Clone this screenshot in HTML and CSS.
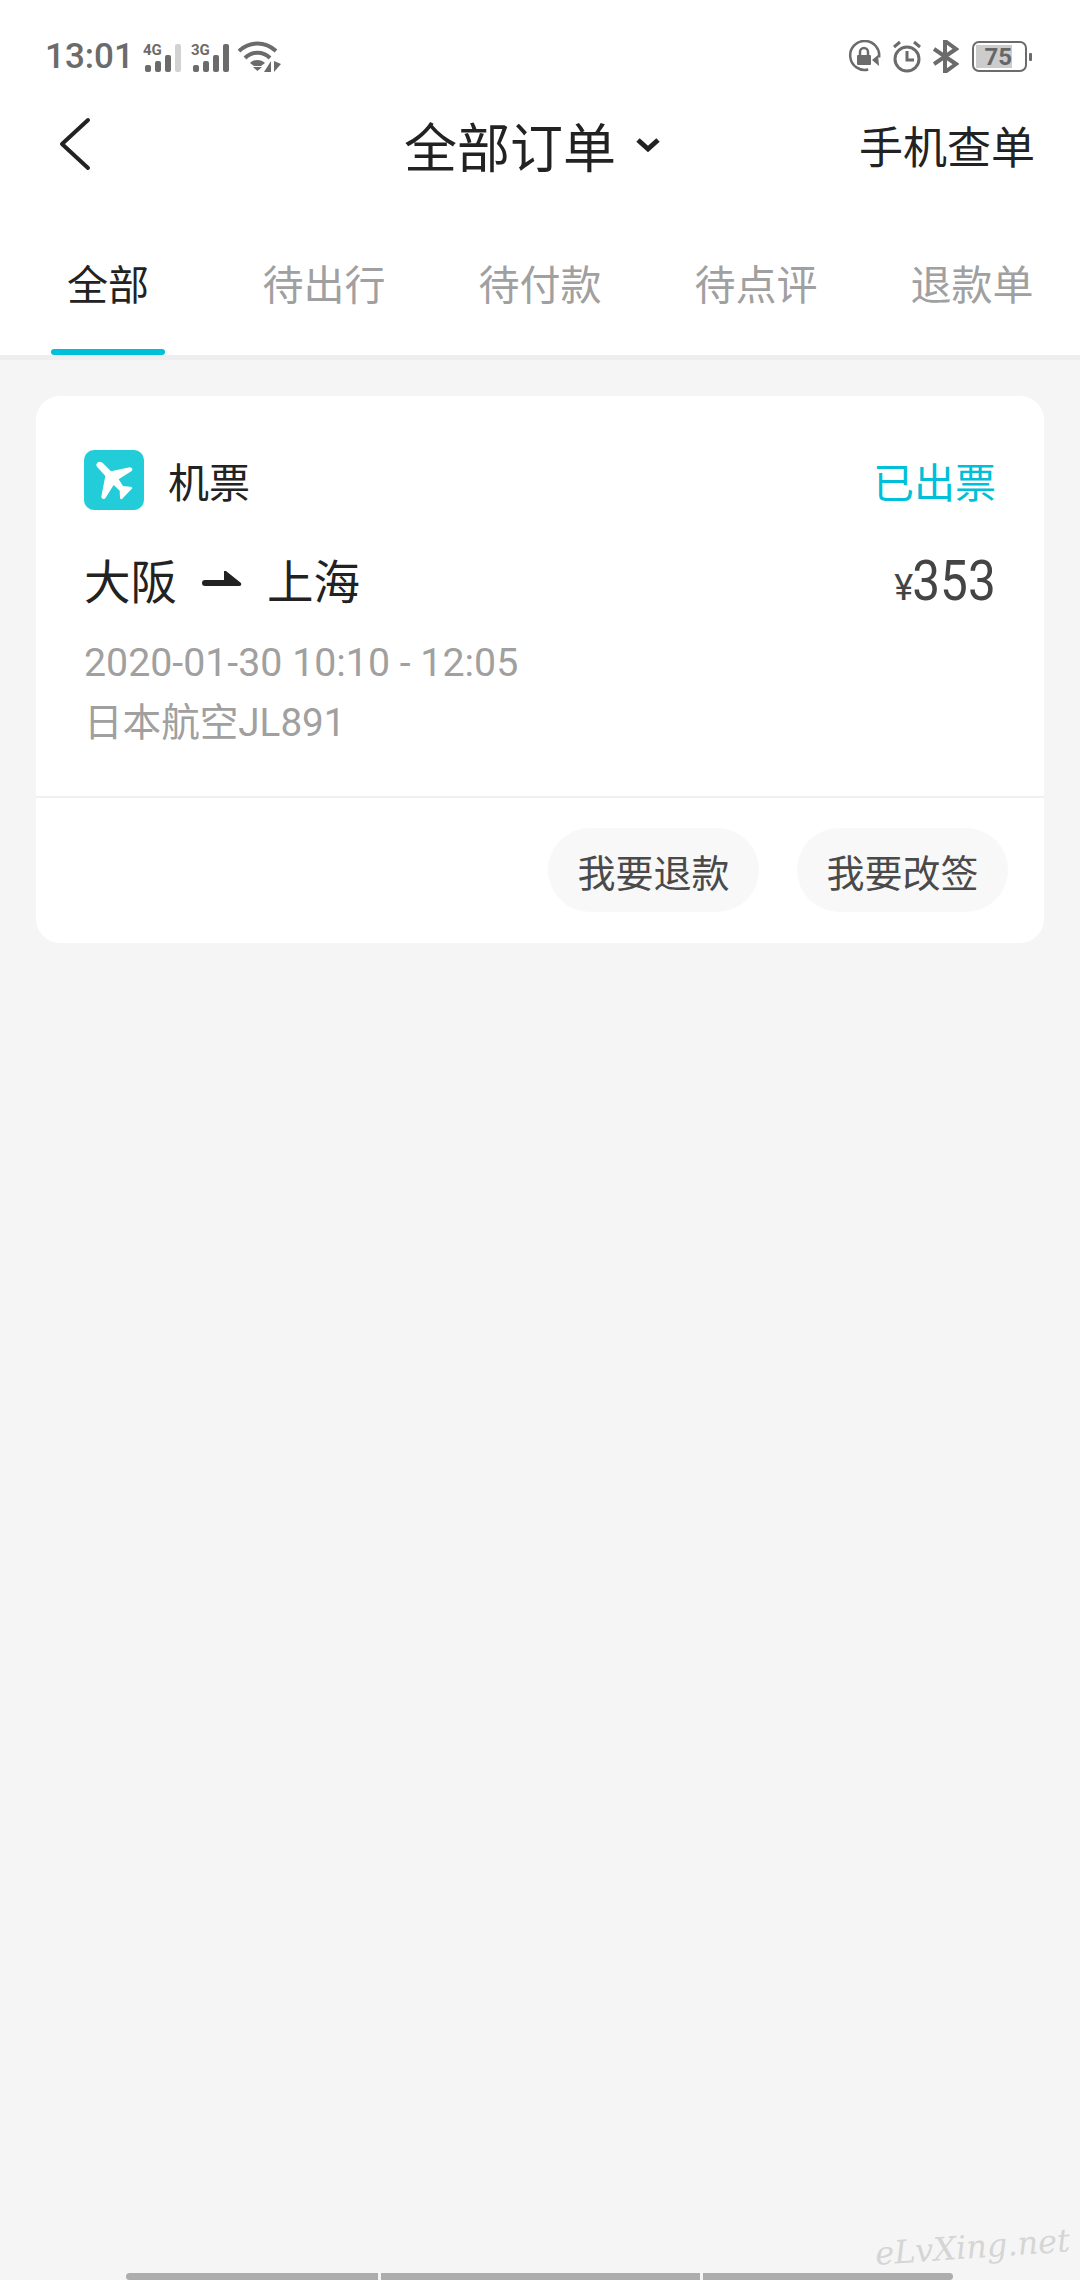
FILE: index.html
```html
<!DOCTYPE html>
<html lang="zh-CN">
<head>
  <meta charset="UTF-8">
  <meta name="viewport" content="width=device-width, initial-scale=1.0">
  <title>全部订单</title>
  <link rel="stylesheet" href="styles.css">
</head>
<body>
  <header class="top">
    <div class="status-bar">
      <div class="status-left">
        <span class="time">13:01</span>
        <svg class="signal" width="38" height="32" viewBox="0 0 38 32">
          <text x="0" y="14" class="net-label">4G</text>
          <rect x="2" y="24" width="6" height="7" rx="2" fill="#6b6b6b"/>
          <rect x="12" y="20" width="6" height="11" rx="2" fill="#6b6b6b"/>
          <rect x="22" y="14" width="6" height="17" rx="2" fill="#6b6b6b"/>
          <rect x="32" y="3" width="6" height="28" rx="2" fill="#d2d2d2"/>
        </svg>
        <svg class="signal" width="38" height="32" viewBox="0 0 38 32">
          <text x="0" y="14" class="net-label">3G</text>
          <rect x="2" y="24" width="6" height="7" rx="2" fill="#6b6b6b"/>
          <rect x="12" y="20" width="6" height="11" rx="2" fill="#6b6b6b"/>
          <rect x="22" y="14" width="6" height="17" rx="2" fill="#6b6b6b"/>
          <rect x="32" y="3" width="6" height="28" rx="2" fill="#6b6b6b"/>
        </svg>
        <svg class="wifi" width="44" height="32" viewBox="0 0 44 32">
          <g fill="none" stroke="#6b6b6b" stroke-width="4">
            <path d="M1 10C12 0 27 0 38 10"/>
            <path d="M7 17C14 10 25 10 32 17"/>
          </g>
          <path d="M12 22C16 18 23 18 27 22L23 25H16Z" fill="#6b6b6b"/>
          <path d="M15 26H24L19.500 30Z" fill="#6b6b6b"/>
          <path d="M33 20V31H26ZM36 20L43 23L36 31Z" fill="#6b6b6b"/>
        </svg>
      </div>
      <div class="status-right">
        <svg width="33" height="33" viewBox="0 0 33 33">
          <path d="M27 25A14.500 14.500 0 1 1 29 9" fill="none" stroke="#6b6b6b" stroke-width="2.500" transform="rotate(35 16.500 16.500)"/>
          <path d="M30 15L31 26L24 20Z" fill="#6b6b6b"/>
          <rect x="9" y="15" width="14" height="10" rx="1" fill="#6b6b6b"/>
          <path d="M12 15V12A4 4 0 0 1 20 12V15" fill="none" stroke="#6b6b6b" stroke-width="2.500"/>
        </svg>
        <svg width="30" height="33" viewBox="0 0 30 33">
          <circle cx="15" cy="19" r="12" fill="none" stroke="#6b6b6b" stroke-width="3"/>
          <path d="M15 11V20H22" fill="none" stroke="#6b6b6b" stroke-width="3"/>
          <path d="M2 7L8 2M28 7L22 2" fill="none" stroke="#6b6b6b" stroke-width="3"/>
        </svg>
        <svg width="26" height="33" viewBox="0 0 26 33">
          <path d="M1 9L23 24L12 32V1L23 9L1 24" fill="none" stroke="#6b6b6b" stroke-width="4"/>
        </svg>
        <div class="battery">
          <div class="battery-body">
            <span class="battery-level">75</span>
          </div>
          <span class="battery-tip"></span>
        </div>
      </div>
    </div>

    <nav class="nav-bar">
      <svg class="back" width="32" height="56" viewBox="0 0 32 56">
        <path d="M29 3L3 27L29 51" fill="none" stroke="#222" stroke-width="4" stroke-linecap="round" stroke-linejoin="round"/>
      </svg>
      <div class="nav-title">
        <h1>全部订单</h1>
        <svg width="24" height="16" viewBox="0 0 24 16">
          <path d="M2 3L12 12L22 3" fill="none" stroke="#222" stroke-width="5"/>
        </svg>
      </div>
      <a class="nav-link">手机查单</a>
    </nav>

    <div class="tabs">
      <div class="tab active">全部</div>
      <div class="tab">待出行</div>
      <div class="tab">待付款</div>
      <div class="tab">待点评</div>
      <div class="tab">退款单</div>
    </div>
  </header>

  <main class="orders">
    <section class="order-card">
      <div class="order-info">
        <div class="order-head">
          <span class="type-icon">
            <svg width="60" height="60" viewBox="0 0 58 60">
              <path d="M12 16.700L20.300 26L16.300 46.700Q16.500 49 18.700 49Q20 49 20.300 48.300L28.700 35L34.700 40.700L35 48.300Q35.500 49.500 37 49L47.300 38.300Q47.500 36.800 45.300 36.700L38 36L33.700 29.300L47 20.700Q48.500 18 44.700 17.300L26 21.300L18 13.300Q15 10.500 12.500 12.500Q10.500 14.500 12 16.700Z" fill="#fff"/>
            </svg>
          </span>
          <span class="type-name">机票</span>
          <span class="order-status">已出票</span>
        </div>
        <div class="route-row">
          <div class="route">
            <span>大阪</span>
            <svg width="42" height="16" viewBox="0 0 40 16">
              <path d="M3 10H22V1H24L39 13Q40 16 37 16H3Q0 16 0 13Q0 10 3 10Z" fill="#222"/>
            </svg>
            <span>上海</span>
          </div>
          <div class="price"><span class="currency">¥</span><span class="amount">353</span></div>
        </div>
        <p class="flight-line">2020-01-30 10:10 - 12:05</p>
        <p class="flight-line carrier">日本航空JL891</p>
      </div>
      <div class="order-actions">
        <button class="pill">我要退款</button>
        <button class="pill">我要改签</button>
      </div>
    </section>
  </main>

  <div class="home-bar">
    <span class="home-seg seg-a"></span>
    <span class="home-seg seg-b"></span>
    <span class="home-seg seg-c"></span>
  </div>
  <div class="watermark">eLvXing.net</div>
</body>
</html>
```

FILE: styles.css
```css
* {
  box-sizing: border-box;
}
body {
  margin: 0;
  width: 1080px;
  height: 2280px;
  overflow: hidden;
  position: relative;
  display: flex;
  flex-direction: column;
  background-color: #f5f5f5;
  color: #222;
  font-family: Roboto, "Noto Sans CJK SC", sans-serif;
}
.top {
  background-color: #fff;
  height: 355px;
  box-shadow: 0 5px 0 #eee;
}
.status-bar {
  height: 88px;
  padding: 40px 48px 0 45px;
  display: flex;
  justify-content: space-between;
  align-items: flex-start;
}
.status-left,
.status-right {
  display: flex;
  align-items: center;
  height: 33px;
}
.time {
  font-size: 35px;
  font-weight: 500;
  color: #6b6b6b;
  margin-right: 9px;
}
.signal {
  margin-right: 10px;
}
.net-label {
  font-family: Roboto, sans-serif;
  font-size: 15px;
  font-weight: 700;
  fill: #6b6b6b;
}
.wifi {
  margin-left: -1px;
}
.status-right {
  gap: 11px;
}
.battery {
  display: flex;
  align-items: center;
  margin-left: 2px;
  gap: 2px;
}
.battery-body {
  width: 55px;
  height: 31px;
  border: 2px solid #6b6b6b;
  border-radius: 7px;
  padding: 2px;
}
.battery-level {
  display: block;
  width: 36px;
  height: 23px;
  line-height: 24px;
  background-color: #ccc;
  color: #666;
  font-size: 24px;
  font-weight: 700;
  text-align: right;
}
.battery-tip {
  width: 3px;
  height: 8px;
  background-color: #6b6b6b;
  border-radius: 1px;
}
.nav-bar {
  height: 114px;
  padding: 0 45px 0 59px;
  display: grid;
  grid-template-columns: 1fr auto 1fr;
  align-items: center;
}
.nav-title {
  display: flex;
  align-items: center;
  gap: 20px;
  margin-right: 30px;
}
.nav-title h1 {
  margin: 0;
  font-size: 53px;
  font-weight: 400;
}
.nav-link {
  justify-self: end;
  font-size: 44px;
  color: #222;
}
.tabs {
  height: 153px;
  display: grid;
  grid-template-columns: repeat(5, 216px);
}
.tab {
  display: flex;
  align-items: center;
  justify-content: center;
  position: relative;
  height: 153px;
  padding-top: 6px;
  font-size: 41px;
  color: #a0a0a0;
}
.tab.active {
  color: #222;
}
.tab.active::after {
  content: "";
  position: absolute;
  left: 51px;
  bottom: 0;
  width: 114px;
  height: 6px;
  border-radius: 3px;
  background-color: #00bfd8;
}
.orders {
  padding: 41px 36px 0;
}
.order-card {
  background-color: #fff;
  border-radius: 24px;
  height: 547px;
}
.order-info {
  height: 402px;
  padding: 54px 48px 0 48px;
  border-bottom: 2px solid #f0f0f0;
}
.order-head {
  display: flex;
  align-items: center;
  height: 60px;
}
.type-icon {
  display: block;
  width: 60px;
  height: 60px;
  border-radius: 10px;
  background-color: #22ccd8;
}
.type-name {
  margin-left: 24px;
  font-size: 41px;
}
.order-status {
  margin-left: auto;
  font-size: 41px;
  color: #00bfd8;
}
.route-row {
  display: flex;
  justify-content: space-between;
  align-items: center;
  margin-top: 35px;
  margin-bottom: 22px;
  height: 66px;
}
.route {
  display: flex;
  align-items: center;
  gap: 24px;
  font-size: 46.500px;
}
.price {
  display: flex;
  align-items: baseline;
  color: #444;
  padding-top: 6px;
}
.currency {
  font-size: 36px;
}
.amount {
  display: inline-block;
  margin-left: -10px;
  font-size: 55px;
  line-height: 60px;
  transform: scaleX(0.9);
  transform-origin: right center;
}
.flight-line {
  margin: 0;
  font-size: 39.300px;
  line-height: 60px;
  color: #a0a0a0;
}
.carrier {
  font-size: 38.600px;
}
.order-actions {
  display: flex;
  justify-content: flex-end;
  gap: 38px;
  padding: 30px 36px 0 0;
}
.pill {
  width: 211px;
  height: 84px;
  padding: 0;
  border: none;
  border-radius: 42px;
  background-color: #f8f8f8;
  color: #4a4a4a;
  font-family: inherit;
  font-size: 38px;
}
.home-bar {
  margin-top: auto;
  height: 7px;
  padding-left: 126px;
  display: flex;
  gap: 3px;
}
.home-seg {
  display: block;
  background-color: #adadad;
}
.seg-a {
  width: 252px;
  border-radius: 4px 0 0 4px;
}
.seg-b {
  width: 319px;
}
.seg-c {
  width: 250px;
  border-radius: 0 4px 4px 0;
}
.watermark {
  position: absolute;
  right: 10px;
  bottom: 14px;
  font-family: "DejaVu Serif", serif;
  font-style: italic;
  font-size: 32px;
  color: #d5d5d5;
  transform: rotate(-4deg);
}
```
